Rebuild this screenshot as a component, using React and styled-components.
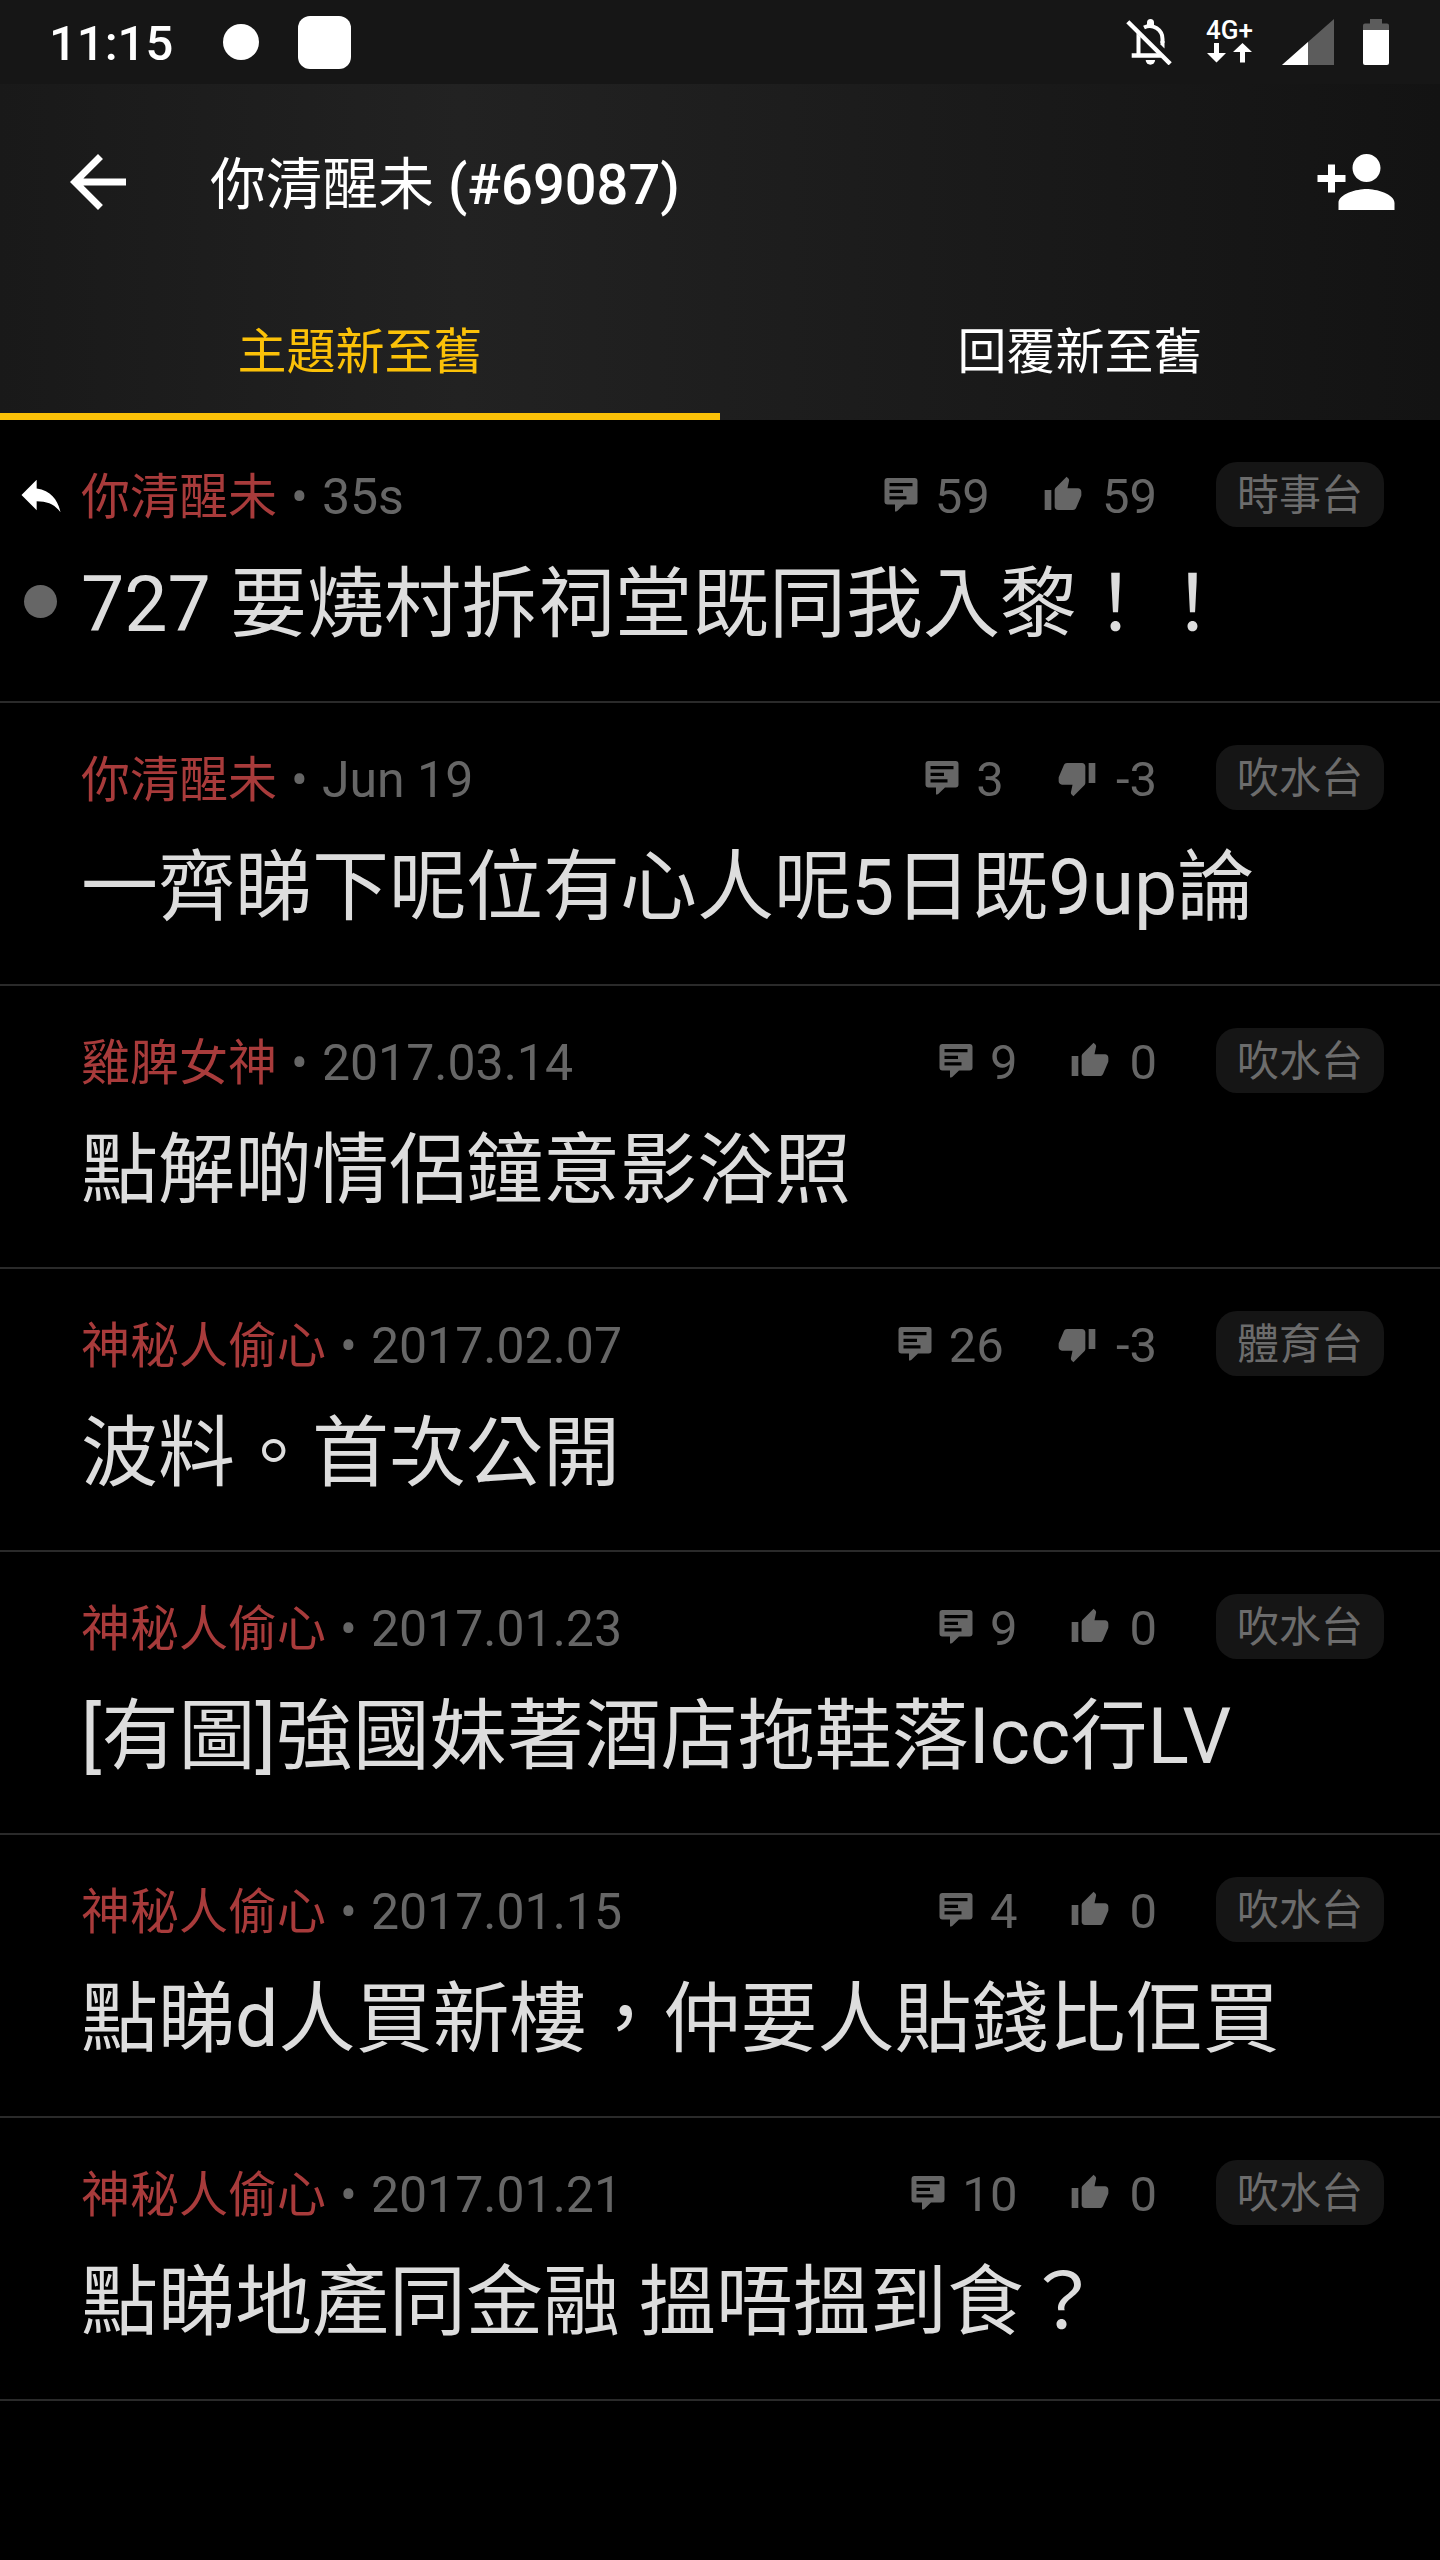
import React, { useState } from "react";
import styled, { createGlobalStyle } from "styled-components";
import { MdArrowBack, MdPersonAdd, MdReply, MdThumbDown, MdThumbUp } from "react-icons/md";

const threads = [
  { id: 1, user: "你清醒未", time: "35s", replies: 59, score: 59, category: "時事台", title: "727 要燒村拆祠堂既同我入黎！！", replied: true, unread: true },
  { id: 2, user: "你清醒未", time: "Jun 19", replies: 3, score: -3, category: "吹水台", title: "一齊睇下呢位有心人呢5日既9up論" },
  { id: 3, user: "雞脾女神", time: "2017.03.14", replies: 9, score: 0, category: "吹水台", title: "點解啲情侶鐘意影浴照" },
  { id: 4, user: "神秘人偷心", time: "2017.02.07", replies: 26, score: -3, category: "體育台", title: "波料。首次公開" },
  { id: 5, user: "神秘人偷心", time: "2017.01.23", replies: 9, score: 0, category: "吹水台", title: "[有圖]強國妹著酒店拖鞋落Icc行LV" },
  { id: 6, user: "神秘人偷心", time: "2017.01.15", replies: 4, score: 0, category: "吹水台", title: "點睇d人買新樓，仲要人貼錢比佢買" },
  { id: 7, user: "神秘人偷心", time: "2017.01.21", replies: 10, score: 0, category: "吹水台", title: "點睇地產同金融 搵唔搵到食？" },
];

const tabs = ["主題新至舊", "回覆新至舊"];

function BellOffIcon() {
  return (
    <svg width="46" height="46" viewBox="0 0 46 46" fill="none" aria-hidden="true">
      <path d="M18 8.5C27 4 36.5 11 36.5 20v4" stroke="#fff" strokeWidth="4" />
      <path d="M34.5 22h4v7.5l-4-4z" fill="#fff" />
      <path d="M21 7V3.5a3.5 3.5 0 0 1 7 0V7z" fill="#fff" />
      <path d="M10.5 14l4 4v16.3h17l4.3 4.4H5.7v-4.4h4.8z" fill="#fff" />
      <path d="M19.7 41h9.4a4.7 4.7 0 0 1-9.4 0z" fill="#fff" />
      <path d="M1.8 2.8l42.4 42" stroke="#fff" strokeWidth="4.4" />
    </svg>
  );
}

function DataArrowsIcon() {
  return (
    <svg width="46" height="20" viewBox="0 0 46 20" fill="#fff" aria-hidden="true">
      <path d="M7 0h5v10h7l-9.500 9.500L0 10h7z" />
      <path d="M33 19.500h5V9h7L35.500 0 26 9h7z" />
    </svg>
  );
}

function SignalIcon() {
  return (
    <svg width="52" height="46" viewBox="0 0 52 46" aria-hidden="true">
      <path d="M0 46L52 0v46z" fill="#5c5c5c" />
      <path d="M0 46l26-23v23z" fill="#fff" />
    </svg>
  );
}

function BatteryIcon() {
  return (
    <svg width="26" height="46" viewBox="0 0 26 46" aria-hidden="true">
      <path d="M7 0h12v4.500h5a2 2 0 0 1 2 2V11H0V6.500a2 2 0 0 1 2-2h5z" fill="#5c5c5c" />
      <path d="M0 11h26v33a2 2 0 0 1-2 2H2a2 2 0 0 1-2-2z" fill="#fff" />
    </svg>
  );
}

function CommentIcon() {
  return (
    <svg width="40" height="40" viewBox="0 0 40 40" fill="currentColor" aria-hidden="true">
      <path
        fillRule="evenodd"
        d="M6.500 3h27a3 3 0 0 1 3 3v20.500a3 3 0 0 1-3 3H23l-6.500 6.300q-.8.700-1.500.700h-1v-7H6.500a3 3 0 0 1-3-3V6a3 3 0 0 1 3-3zM8.500 8v3.300h23V8zM8.500 14.700V18H22v-3.300zM8.500 21.300v3.300h17v-3.300z"
      />
    </svg>
  );
}

function Thread({ thread }) {
  const negative = thread.score < 0;
  return (
    <ThreadItem>
      <Gutter>{thread.replied && <MdReply size={52} aria-label="replied" />}</Gutter>
      <Meta>
        <UserLink href="#user">{thread.user}</UserLink>
        <Bullet>•</Bullet>
        <Time>{thread.time}</Time>
        <Stat $gap={14}>
          <CommentIcon />
          <span>{thread.replies}</span>
        </Stat>
        <Stat $gap={19}>
          {negative ? <MdThumbDown size={40} /> : <MdThumbUp size={40} />}
          <span>{thread.score}</span>
        </Stat>
        <Category href="#category">{thread.category}</Category>
      </Meta>
      <Gutter>{thread.unread && <UnreadDot />}</Gutter>
      <ThreadTitle>
        <a href="#thread">{thread.title}</a>
      </ThreadTitle>
    </ThreadItem>
  );
}

function App() {
  const [activeTab, setActiveTab] = useState(0);

  return (
    <Page>
      <GlobalStyle />
      <StatusBar>
        <Clock>11:15</Clock>
        <NoticeDot />
        <NoticeSquare />
        <StatusIcons>
          <BellOffIcon />
          <Network>
            <span>4G+</span>
            <DataArrowsIcon />
          </Network>
          <SignalIcon />
          <BatteryIcon />
        </StatusIcons>
      </StatusBar>
      <Header>
        <Toolbar>
          <IconButton aria-label="Back">
            <MdArrowBack size={84} />
          </IconButton>
          <PageTitle>
            <span>你清醒未</span> (#69087)
          </PageTitle>
          <IconButton aria-label="Follow">
            <MdPersonAdd size={84} />
          </IconButton>
        </Toolbar>
        <Tabs role="tablist">
          {tabs.map((label, index) => (
            <Tab
              key={label}
              role="tab"
              aria-selected={activeTab === index}
              $active={activeTab === index}
              onClick={() => setActiveTab(index)}
            >
              {label}
            </Tab>
          ))}
        </Tabs>
      </Header>
      <ThreadList>
        {threads.map((thread) => (
          <Thread key={thread.id} thread={thread} />
        ))}
      </ThreadList>
    </Page>
  );
}

const GlobalStyle = createGlobalStyle`
  * {
    box-sizing: border-box;
  }

  body {
    margin: 0;
    background: #000;
  }

  a {
    color: inherit;
    text-decoration: none;
  }

  button {
    padding: 0;
    border: none;
    background: none;
    color: inherit;
    font: inherit;
    cursor: pointer;
  }

  svg {
    display: block;
    flex-shrink: 0;
  }
`;

const Page = styled.div`
  min-height: 100vh;
  background: #000;
  color: #fff;
  font-family: Roboto, "Noto Sans CJK TC", sans-serif;
  font-size: 49px;
  line-height: 60px;
`;

const StatusBar = styled.div`
  display: flex;
  align-items: center;
  height: 84px;
  padding: 0 51px 0 49px;
  background: #161616;
`;

const Clock = styled.span`
  padding-top: 4px;
  font-weight: 500;
`;

const NoticeDot = styled.span`
  width: 36px;
  height: 36px;
  margin-left: 50px;
  border-radius: 50%;
  background: #fff;
`;

const NoticeSquare = styled.span`
  width: 53px;
  height: 53px;
  margin-left: 39px;
  border-radius: 12px;
  background: #fff;
`;

const StatusIcons = styled.div`
  display: flex;
  align-items: center;
  gap: 29px;
  margin-left: auto;
`;

const Network = styled.div`
  display: flex;
  flex-direction: column;
  align-items: flex-end;
  min-width: 52px;
  padding-bottom: 4px;
  font-size: 26px;
  font-weight: 500;
  line-height: 26px;
`;

const Header = styled.header`
  background: linear-gradient(90deg, #191919, #222 32%, #131313);
`;

const Toolbar = styled.div`
  display: flex;
  align-items: center;
  height: 196px;
  padding: 0 42px 0 56px;
`;

const IconButton = styled.button`
  flex-shrink: 0;
`;

const PageTitle = styled.h1`
  flex: 1;
  margin: 0;
  padding: 6px 0 0 70px;
  font-size: 56px;
  font-weight: 500;
  line-height: 66px;

  span {
    font-weight: 400;
  }
`;

const Tabs = styled.div`
  display: flex;
`;

const Tab = styled.button`
  flex: 1;
  height: 140px;
  padding-top: 12px;
  border-bottom: 7px solid ${({ $active }) => ($active ? "#fbc108" : "transparent")};
  color: ${({ $active }) => ($active ? "#fbc108" : "#fff")};
`;

const ThreadList = styled.ul`
  margin: 0;
  padding: 0;
  list-style: none;
`;

const ThreadItem = styled.li`
  display: grid;
  grid-template-columns: 81px 1fr;
  row-gap: 33px;
  padding: 42px 56px 50px 0;
  border-bottom: 2px solid #2a2a2a;
`;

const Gutter = styled.div`
  display: flex;
  align-items: center;
  justify-content: center;
`;

const UnreadDot = styled.span`
  width: 33px;
  height: 33px;
  margin-bottom: 8px;
  border-radius: 50%;
  background: #666;
`;

const Meta = styled.div`
  display: flex;
  align-items: center;
  height: 65px;
  color: #666;

  span {
    padding-top: 5px;
  }
`;

const UserLink = styled.a`
  padding-top: 6px;
  color: #a83b3b;
`;

const Bullet = styled.span`
  margin: 0 14px;
  font-size: 50px;
`;

const Time = styled.span`
  flex: 1;
  font-size: 50px;
`;

const Stat = styled.div`
  display: flex;
  align-items: center;
  gap: ${({ $gap }) => $gap}px;
  margin-right: 53px;

  & + & {
    margin-right: 59px;
  }
`;

const Category = styled.a`
  padding: 2px 21px 0;
  border-radius: 21px;
  background: #151515;
  color: #6c6c6c;
  font-size: 42px;
  line-height: 63px;
`;

const ThreadTitle = styled.h2`
  margin: 0;
  color: #ddd;
  font-size: 77px;
  font-weight: 400;
  line-height: 91px;
`;

export default App;
